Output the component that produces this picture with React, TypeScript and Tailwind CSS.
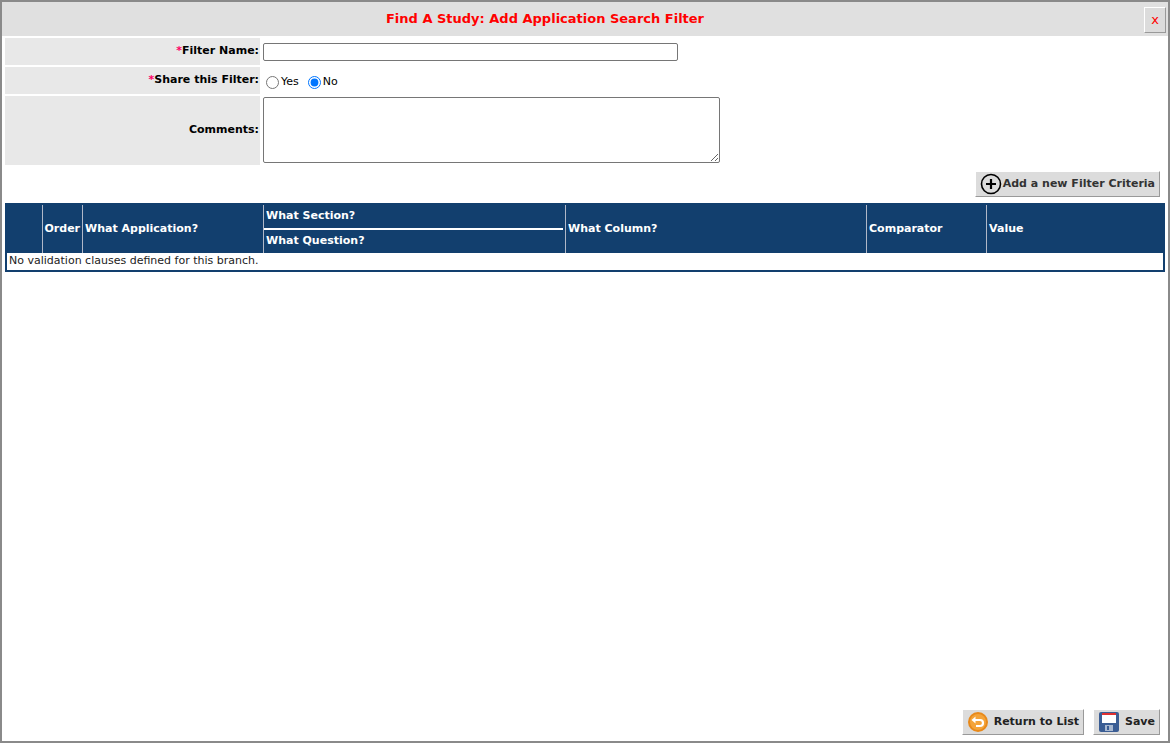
export default function App() {
  const font = { fontFamily: '"DejaVu Sans", Verdana, sans-serif' };
  return (
    <div className="h-[743px] w-[1170px] border-2 border-[#8a8a8a] bg-white flex flex-col text-[11px] text-black" style={font}>
      <div className="h-[34px] bg-[#e0e0e0] flex items-center relative shrink-0">
        <div className="flex-1 text-center text-[13px] font-bold text-[#ff0000] pr-[80px]">Find A Study: Add Application Search Filter</div>
        <button className="absolute right-[2px] top-[5px] w-[22px] h-[26px] bg-[#dcdcdc] border border-t-white border-l-white border-r-[#999] border-b-[#999] text-[#ff0000] text-[13px]">x</button>
      </div>
      <div className="px-[3px] pt-[2px] flex flex-col gap-[2px]">
        <div className="flex gap-[3px] h-[27px]">
          <div className="w-[255px] bg-[#e8e8e8] flex items-center justify-end pr-[1px] font-bold"><span className="text-[#ff0066]">*</span>Filter Name:</div>
          <div className="flex items-center"><input className="w-[415px] h-[18px] border border-[#767676] rounded-[2px]" /></div>
        </div>
        <div className="flex gap-[3px] h-[27px]">
          <div className="w-[255px] bg-[#e8e8e8] flex items-center justify-end pr-[1px] font-bold"><span className="text-[#ff0066]">*</span>Share this Filter:</div>
          <div className="flex items-center gap-[1px] pl-[3px] pt-[3px]">
            <input type="radio" name="s" className="w-[13px] h-[13px] m-0" />
            <span className="mr-[8px] ml-[1px]">Yes</span>
            <input type="radio" name="s" defaultChecked className="w-[13px] h-[13px] m-0" />
            <span className="ml-[1px]">No</span>
          </div>
        </div>
        <div className="flex gap-[3px] h-[69px]">
          <div className="w-[255px] bg-[#e8e8e8] flex items-center justify-end pr-[1px] font-bold">Comments:</div>
          <div className="pt-[1px]"><textarea className="w-[457px] h-[66px] border border-[#767676] rounded-[2px] block" /></div>
        </div>
      </div>
      <div className="flex justify-end pr-[8px] mt-[6px]">
        <button className="h-[26px] px-[4px] bg-[#dcdcdc] border border-t-white border-l-white border-r-[#999] border-b-[#999] flex items-center gap-[1px] font-bold text-[#333]">
          <svg width="22" height="22" viewBox="0 0 22 22"><circle cx="11" cy="11" r="9.5" fill="none" stroke="#000" strokeWidth="1.6" /><path d="M11 6v10M6 11h10" stroke="#000" strokeWidth="2.2" /></svg>
          Add a new Filter Criteria
        </button>
      </div>
      <div className="px-[3px] mt-[6px]">
        <table className="w-full border-collapse border-2 border-[#123f6e]">
          <thead>
            <tr className="bg-[#123f6e] text-white font-bold text-left h-[48px]">
              <th className="w-[36px] border-r border-[#b0b8c8]"></th>
              <th className="w-[38px] border-r border-[#b0b8c8] px-[2px]">Order</th>
              <th className="w-[181px] border-r border-[#b0b8c8] px-[2px]">What Application?</th>
              <th className="w-[302px] border-r border-[#b0b8c8] p-0">
                <div className="h-[23px] flex items-center px-[2px]">What Section?</div>
                <div className="h-[2px] bg-white mr-[2px]"></div>
                <div className="h-[23px] flex items-center px-[2px]">What Question?</div>
              </th>
              <th className="w-[301px] border-r border-[#b0b8c8] px-[2px]">What Column?</th>
              <th className="w-[120px] border-r border-[#b0b8c8] px-[2px]">Comparator</th>
              <th className="px-[2px]">Value</th>
            </tr>
          </thead>
          <tbody>
            <tr className="h-[17px]"><td colSpan={7} className="px-[2px] text-[#222]" style={{ fontFamily: 'Verdana, "DejaVu Sans", sans-serif' }}>No validation clauses defined for this branch.</td></tr>
          </tbody>
        </table>
      </div>
      <div className="flex-1"></div>
      <div className="flex justify-end gap-[9px] pr-[8px] pb-[6px]">
        <button className="h-[26px] px-[4px] bg-[#dcdcdc] border border-t-white border-l-white border-r-[#999] border-b-[#999] flex items-center gap-[5px] font-bold text-[#222]">
          <svg width="22" height="22" viewBox="0 0 22 22"><circle cx="11" cy="11" r="10" fill="#e8891a" /><circle cx="11" cy="11" r="8" fill="#f4a43a" /><path d="M7 9h6a3 3 0 0 1 0 6H9" fill="none" stroke="#fff" strokeWidth="2.2" /><path d="M4.5 9l4-3.5v7z" fill="#fff" /></svg>
          Return to List
        </button>
        <button className="h-[26px] px-[4px] bg-[#dcdcdc] border border-t-white border-l-white border-r-[#999] border-b-[#999] flex items-center gap-[5px] font-bold text-[#222]">
          <svg width="22" height="22" viewBox="0 0 22 22"><rect x="1" y="1" width="20" height="20" rx="2" fill="#3a5d94" /><rect x="4" y="2" width="14" height="10" fill="#fff" /><rect x="4" y="2" width="14" height="2" fill="#e03030" /><rect x="7" y="14" width="8" height="6" fill="#a8b8d0" /><rect x="9" y="15" width="2" height="4" fill="#3a5d94" /></svg>
          Save
        </button>
      </div>
    </div>
  );
}
